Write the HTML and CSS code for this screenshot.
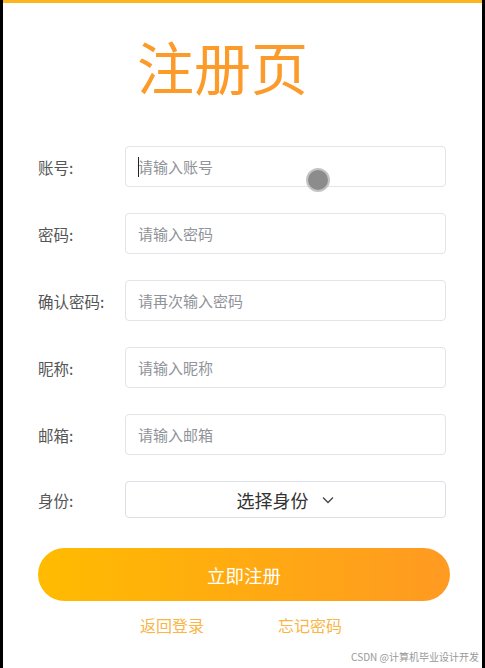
FILE: index.html
```html
<!DOCTYPE html>
<html lang="zh-CN">
<head>
    <meta charset="UTF-8">
    <meta name="viewport" content="width=device-width, initial-scale=1.0">
    <title>注册页</title>
    <link rel="stylesheet" href="styles.css">
</head>
<body>
    <div class="frame">
        <div class="top-bar"></div>
        <main class="register">
            <h1 class="title">注册页</h1>
            <form class="form">
                <div class="row">
                    <label class="label">账号:</label>
                    <div class="field">
                        <span class="caret"></span>
                        <input class="input" type="text" placeholder="请输入账号">
                        <span class="touch-dot"></span>
                    </div>
                </div>
                <div class="row">
                    <label class="label">密码:</label>
                    <div class="field"><input class="input" type="password" placeholder="请输入密码"></div>
                </div>
                <div class="row">
                    <label class="label">确认密码:</label>
                    <div class="field"><input class="input" type="password" placeholder="请再次输入密码"></div>
                </div>
                <div class="row">
                    <label class="label">昵称:</label>
                    <div class="field"><input class="input" type="text" placeholder="请输入昵称"></div>
                </div>
                <div class="row">
                    <label class="label">邮箱:</label>
                    <div class="field"><input class="input" type="text" placeholder="请输入邮箱"></div>
                </div>
                <div class="row row-select">
                    <label class="label">身份:</label>
                    <div class="select">
                        <span>选择身份</span>
                        <svg class="chevron" width="14" height="14" viewBox="0 0 14 14">
                            <path d="M2 4.5 L7 9.5 L12 4.5" fill="none" stroke="#444" stroke-width="1.3"/>
                        </svg>
                    </div>
                </div>
                <button class="submit" type="button">立即注册</button>
                <div class="links">
                    <a href="#">返回登录</a>
                    <a href="#">忘记密码</a>
                </div>
            </form>
        </main>
        <div class="watermark">CSDN @计算机毕业设计开发</div>
    </div>
</body>
</html>
```

FILE: styles.css
```css
* {
    margin: 0;
    padding: 0;
    box-sizing: border-box;
}

body {
    font-family: "Noto Sans CJK SC", "Noto Sans", sans-serif;
    background-color: #000;
    color: #555;
}

.frame {
    position: relative;
    height: 668px;
    margin: 0 3px;
    background-color: #fff;
    overflow: hidden;
}

.top-bar {
    height: 3px;
    background-color: #fbb41c;
}

.register {
    padding: 0 35px;
}

.title {
    font-size: 57px;
    font-weight: 400;
    line-height: 1;
    color: #fc9a2a;
    text-align: left;
    padding-left: 99px;
    margin-top: 34px;
    margin-bottom: 52px;
}

.row {
    display: flex;
    align-items: center;
    height: 41px;
    margin-bottom: 26px;
}

.row-select {
    height: 37px;
    margin-bottom: 30px;
}

.label {
    width: 87px;
    font-size: 15.5px;
    color: #555;
}

.field {
    position: relative;
    width: 321px;
    height: 41px;
}

.input {
    width: 100%;
    height: 100%;
    border: 1px solid #e2e4e8;
    border-radius: 4px;
    padding: 0 12px;
    font-family: "Noto Sans CJK SC", sans-serif;
    font-size: 15px;
    color: #333;
    outline: none;
}

.input::placeholder {
    color: #909399;
}

.caret {
    position: absolute;
    left: 13px;
    top: 11px;
    width: 1px;
    height: 20px;
    background-color: #222;
}

.touch-dot {
    position: absolute;
    left: 181px;
    top: 22px;
    width: 24px;
    height: 24px;
    border-radius: 50%;
    background-color: #8c8c8c;
    border: 2px solid #c4c4c4;
}

.select {
    display: flex;
    align-items: center;
    justify-content: center;
    gap: 12px;
    width: 321px;
    height: 37px;
    border: 1px solid #dcdfe6;
    border-radius: 4px;
    font-size: 18px;
    color: #333;
}

.chevron {
    margin-top: 1px;
}

.submit {
    display: block;
    width: 412px;
    height: 53px;
    border: none;
    border-radius: 27px;
    background: linear-gradient(90deg, #ffbb00, #ff9a22);
    color: #fff;
    font-family: "Noto Sans CJK SC", sans-serif;
    font-size: 18.5px;
}

.links {
    display: flex;
    gap: 74px;
    padding-left: 102px;
    margin-top: 12px;
}

.links a {
    font-size: 16px;
    color: #f9b545;
    text-decoration: none;
}

.watermark {
    position: absolute;
    right: 3px;
    bottom: 4px;
    font-size: 10px;
    color: #999;
}
```
